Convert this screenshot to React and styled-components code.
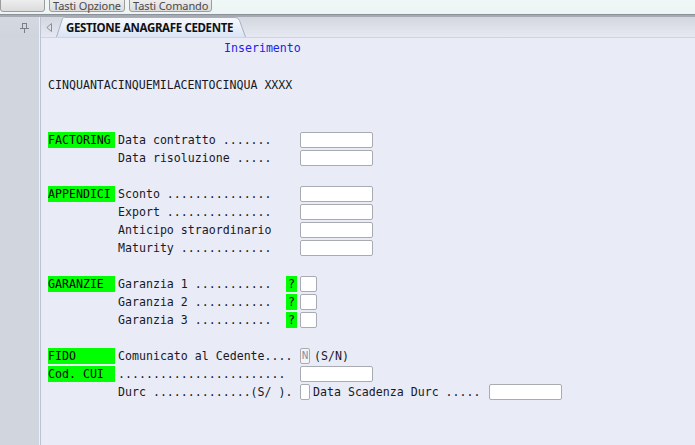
import styled, { createGlobalStyle } from "styled-components";

const Global = createGlobalStyle`
    html, body {
        margin: 0;
        padding: 0;
        overflow: hidden;
        background: #e9ecf6;
    }
`

const mono = `"DejaVu Sans Mono", "Liberation Mono", monospace`

export default function App() {
    return (
        <Page>
            <Global />
            <TopBar>
                <TopButton $w={45}></TopButton>
                <TopButton $w={76}>Tasti Opzione</TopButton>
                <TopButton $w={83}>Tasti Comando</TopButton>
            </TopBar>
            <Divider />
            <Body>
                <SidePanel>
                    <SideHeader>
                        <svg width="9" height="10" viewBox="0 0 9 10">
                            <rect x="2.5" y="0.5" width="4" height="5" fill="none" stroke="#7a7e86" />
                            <line x1="0" y1="5.5" x2="9" y2="5.5" stroke="#7a7e86" />
                            <line x1="4.5" y1="6" x2="4.5" y2="10" stroke="#7a7e86" />
                        </svg>
                    </SideHeader>
                </SidePanel>
                <Main>
                    <TabBar>
                        <Arrow>
                            <svg width="6" height="9" viewBox="0 0 6 9">
                                <path d="M5.5 0.5 L0.8 4.5 L5.5 8.5 Z" fill="none" stroke="#8a8e96" />
                            </svg>
                        </Arrow>
                        <Tab>
                            <svg width="190" height="20" viewBox="0 0 190 20">
                                <defs>
                                    <linearGradient id="tabg" x1="0" y1="0" x2="0" y2="1">
                                        <stop offset="0" stopColor="#f7f9fd" />
                                        <stop offset="1" stopColor="#dbe5f6" />
                                    </linearGradient>
                                </defs>
                                <path d="M0.5 20 L6.5 1.5 Q7 0.5 8.5 0.5 L179 0.5 Q182 0.5 183.5 3.5 L189.5 20"
                                    fill="url(#tabg)" stroke="#a9afbb" />
                            </svg>
                            <TabLabel>GESTIONE ANAGRAFE CEDENTE</TabLabel>
                        </Tab>
                    </TabBar>
                    <Content>
                        <Title>Inserimento</Title>
                        <Heading>CINQUANTACINQUEMILACENTOCINQUA XXXX</Heading>

                        <Section>
                            <Row>
                                <Tag>FACTORING</Tag>
                                <Label>Data contratto .......</Label>
                                <Field />
                            </Row>
                            <Row>
                                <Tag $empty />
                                <Label>Data risoluzione .....</Label>
                                <Field />
                            </Row>
                        </Section>

                        <Section>
                            <Row>
                                <Tag>APPENDICI</Tag>
                                <Label>Sconto ...............</Label>
                                <Field />
                            </Row>
                            <Row>
                                <Tag $empty />
                                <Label>Export ...............</Label>
                                <Field />
                            </Row>
                            <Row>
                                <Tag $empty />
                                <Label>Anticipo straordinario</Label>
                                <Field />
                            </Row>
                            <Row>
                                <Tag $empty />
                                <Label>Maturity .............</Label>
                                <Field />
                            </Row>
                        </Section>

                        <Section>
                            {[1, 2, 3].map(n => (
                                <Row key={n}>
                                    {n === 1 ? <Tag>GARANZIE</Tag> : <Tag $empty />}
                                    <Label>
                                        Garanzia {n} ...........
                                        <Help>?</Help>
                                    </Label>
                                    <Field $w={17} />
                                </Row>
                            ))}
                        </Section>

                        <Section>
                            <Row>
                                <Tag>FIDO</Tag>
                                <Label>Comunicato al Cedente....</Label>
                                <Field $w={10} $muted>N</Field>
                                <Note>(S/N)</Note>
                            </Row>
                            <Row>
                                <Tag>Cod. CUI</Tag>
                                <Label>........................</Label>
                                <Field />
                            </Row>
                            <Row>
                                <Tag $empty />
                                <Label>Durc ..............(S/ ).</Label>
                                <Field $w={10} />
                                <Note $gap={3} $w={176}>Data Scadenza Durc .....</Note>
                                <Field />
                            </Row>
                        </Section>
                    </Content>
                </Main>
            </Body>
        </Page>
    )
}

const Page = styled.div`
    width: 695px;
    height: 445px;
    display: flex;
    flex-direction: column;
    overflow: hidden;
`

const TopBar = styled.div`
    height: 14px;
    flex: none;
    display: flex;
    align-items: flex-end;
    gap: 4px;
    padding: 0 0 2px 0;
    box-sizing: border-box;
    overflow: hidden;
    background: linear-gradient(#f0f7f7, #ecf4f4);
`

const TopButton = styled.div`
    width: ${p => p.$w}px;
    height: 16px;
    flex: none;
    box-sizing: border-box;
    border: 1px solid #9c9c9c;
    border-radius: 0 0 3px 3px;
    background: linear-gradient(#f2f2f2, #dcdcdc);
    font-family: "Noto Sans", "Open Sans", sans-serif;
    font-size: 11px;
    letter-spacing: -0.1px;
    line-height: 11px;
    padding: 3px 0 0 3px;
    color: #4a4a4a;
    white-space: nowrap;
`

const Divider = styled.div`
    height: 3px;
    flex: none;
    background: #a6aab2;
    border-top: 1px solid #8c9098;
    box-sizing: border-box;
`

const Body = styled.div`
    flex: 1;
    display: flex;
    min-height: 0;
`

const SidePanel = styled.div`
    width: 39px;
    flex: none;
    background: #d1d5de;
    border-right: 1px solid #eef0f6;
`

const SideHeader = styled.div`
    height: 21px;
    display: flex;
    align-items: center;
    justify-content: flex-end;
    padding-right: 10px;
    background: linear-gradient(#d4d8e0, #d0d4dd);
`

const Main = styled.div`
    flex: 1;
    display: flex;
    flex-direction: column;
    border-left: 1px solid #bcc3d6;
`

const TabBar = styled.div`
    height: 21px;
    flex: none;
    display: flex;
    align-items: flex-end;
    box-sizing: border-box;
    border-bottom: 1px solid #c9d5f0;
    background: linear-gradient(#d3d7e0, #e6e9f2);
`

const Arrow = styled.div`
    width: 15px;
    height: 20px;
    display: flex;
    align-items: center;
    justify-content: center;
`

const Tab = styled.div`
    position: relative;
    width: 190px;
    height: 20px;
    display: flex;
    align-items: center;
    padding-left: 10px;
    box-sizing: border-box;

    svg {
        position: absolute;
        left: 0;
        top: 0;
    }
`

const TabLabel = styled.span`
    position: relative;
    font-family: "Noto Sans", "Open Sans", sans-serif;
    font-weight: 700;
    font-size: 11.5px;
    letter-spacing: -0.35px;
    color: #111;
    white-space: nowrap;
`

const Content = styled.div`
    flex: 1;
    padding: 1px 0 0 7px;
    font-family: ${mono};
    font-size: 11.6px;
    color: #181826;
    background: #e9ecf6;
`

const Line = styled.div`
    height: 18px;
    line-height: 18px;
    white-space: pre;
`

const Title = styled(Line)`
    padding-left: 176px;
    color: #2323e6;
`

const Heading = styled(Line)`
    margin-top: 19px;
    margin-bottom: 37px;
`

const Section = styled.div`
    margin-bottom: 18px;
`

const Row = styled.div`
    height: 18px;
    display: flex;
    align-items: center;
    white-space: pre;
`

const Tag = styled.div`
    width: 67px;
    height: 16px;
    line-height: 16px;
    margin-right: 3px;
    flex: none;
    overflow: hidden;
    background: ${p => (p.$empty ? "transparent" : "#00ff00")};
    color: #000;
`

const Label = styled.div`
    width: 182px;
    flex: none;
    display: flex;
    justify-content: space-between;
    align-items: center;
`

const Help = styled.span`
    width: 11px;
    height: 16px;
    line-height: 16px;
    margin-right: 3px;
    background: #00ff00;
    color: #000;
    text-align: center;
`

const Field = styled.div`
    width: ${p => p.$w || 73}px;
    height: 16px;
    flex: none;
    box-sizing: border-box;
    border: 1px solid #a9abb3;
    border-radius: 2px;
    background: ${p => (p.$muted ? "#f2f4f8" : "#fff")};
    color: #8796a8;
    font-size: 11px;
    line-height: 14px;
    text-align: center;
`

const Note = styled.span`
    margin-left: ${p => p.$gap ?? 4}px;
    ${p => (p.$w ? `width: ${p.$w}px;` : "")}
    flex: none;
`
